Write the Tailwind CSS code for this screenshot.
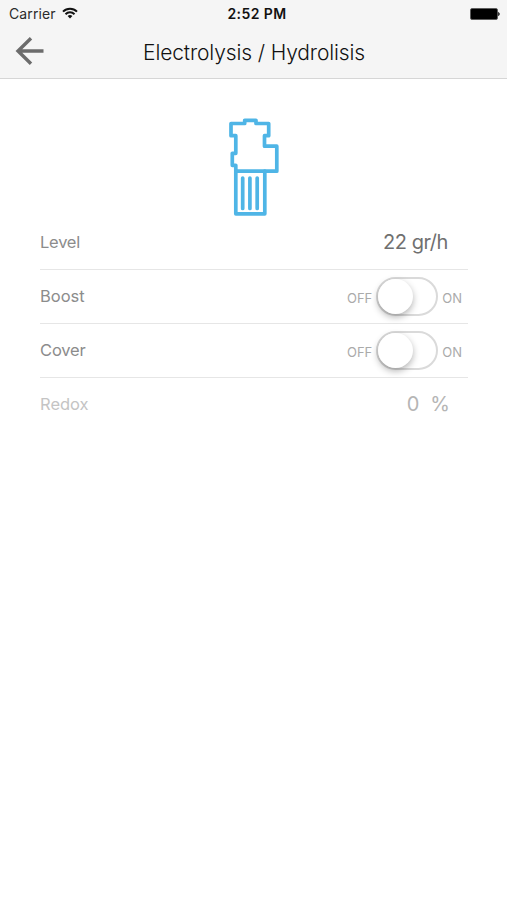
<!DOCTYPE html>
<html lang="en">
<head>
<meta charset="utf-8">
<meta name="viewport" content="width=device-width, initial-scale=1">
<title>Electrolysis / Hydrolisis</title>
<script src="https://cdn.jsdelivr.net/npm/@tailwindcss/browser@4"></script>
</head>
<body class="bg-white font-['Inter',sans-serif]">
<div class="flex h-[900px] w-[507px] flex-col overflow-hidden">
  <header class="h-[79px] shrink-0 border-b border-[#d6d6d6] bg-[#f5f5f5]">
    <div class="grid h-[27px] grid-cols-[1fr_80px_1fr] items-center pl-[9px] pr-[7px]">
      <div class="flex items-center gap-[6px]">
        <span class="text-[14px] leading-[27px] tracking-[0.12px] text-[#2b2b2b]">Carrier</span>
        <svg class="-mt-[2px] h-[12px] w-[16px]" viewBox="0 0 16 12" fill="none" stroke="#111" stroke-width="2">
          <path d="M1 4.6a10 10 0 0 1 14 0M3.5 7.2a6.4 6.4 0 0 1 9 0"/>
          <path d="M8 11.6 5.6 9.1a3.4 3.4 0 0 1 4.8 0z" fill="#111" stroke="none"/>
        </svg>
      </div>
      <span class="pl-[5px] text-center text-[14px] font-semibold leading-[27px] tracking-[0.4px] text-[#111]">2:52 PM</span>
      <svg class="h-[12px] w-[30px] justify-self-end" viewBox="0 0 30 12">
        <rect x="0.5" y="0.5" width="27" height="11" rx="1.5" fill="#000" stroke="#555" stroke-width="0.8"/>
        <path d="M28.2 4.2a1.9 1.9 0 0 1 0 3.6z" fill="#222" stroke="#222" stroke-width="0.5"/>
      </svg>
    </div>
    <div class="grid h-[51px] grid-cols-[60px_1fr_60px] items-center">
      <svg class="ml-[15px] -mt-[3px] h-[30px] w-[30px]" viewBox="0 0 30 30" fill="none" stroke="#6c6c6c" stroke-width="3.4">
        <path d="M16 2.2 3 15l13 12.8M3 15h25.5"/>
      </svg>
      <h1 class="pl-px text-center text-[21px] font-light leading-[51px] tracking-[-0.13px] text-[#111]">Electrolysis / Hydrolisis</h1>
    </div>
  </header>

  <main class="flex flex-col px-10 pt-[37px]">
    <svg class="mx-auto h-[100px] w-[54px]" viewBox="227 116 54 100" fill="none" stroke="#4fb5e6" stroke-width="3.7" stroke-linejoin="round" stroke-linecap="round">
      <path d="M231 123.5H244.7V120.3H256V123.5H268.7V135.7H264.5V146.2H276.8V171.2H235.8V165.3H232.3V153.3H235.8V135.7H231z"/>
      <path d="M235.8 171.2V213.8H264.8V171.2M242.7 178V208.5M249.9 178V208.5M257.2 178V208.5"/>
    </svg>
    <ul class="w-[428px] text-[16.5px] leading-[24px] text-[#8c8c8c]">
      <li class="flex h-[54px] items-center justify-between border-b border-[#e6e6e6] pr-5">
        <span class="pb-px tracking-[-0.25px]">Level</span>
        <span class="pb-px text-[20px] tracking-[-0.45px] text-[#707070]">22 gr/h</span>
      </li>
      <li class="flex h-[54px] items-center justify-between border-b border-[#e6e6e6] pr-[6px]">
        <span class="pb-px">Boost</span>
        <div class="flex items-center gap-1 text-[13px] text-[#aaa]">
          <span class="pt-[2px]">OFF</span>
          <span class="flex h-[39px] w-[62px] items-center rounded-full border-2 border-[#dadada] bg-white">
            <span class="h-[35px] w-[35px] rounded-full bg-white shadow-[0_3px_7px_rgba(0,0,0,0.3)]"></span>
          </span>
          <span class="pt-[2px]">ON</span>
        </div>
      </li>
      <li class="flex h-[54px] items-center justify-between border-b border-[#e6e6e6] pr-[6px]">
        <span class="pb-px tracking-[-0.15px]">Cover</span>
        <div class="flex items-center gap-1 text-[13px] text-[#aaa]">
          <span class="pt-[2px]">OFF</span>
          <span class="flex h-[39px] w-[62px] items-center rounded-full border-2 border-[#dadada] bg-white">
            <span class="h-[35px] w-[35px] rounded-full bg-white shadow-[0_3px_7px_rgba(0,0,0,0.3)]"></span>
          </span>
          <span class="pt-[2px]">ON</span>
        </div>
      </li>
      <li class="flex h-[54px] items-center justify-between pr-[18px] pb-[2px] text-[#c4c4c4]">
        <span>Redox</span>
        <span class="flex gap-[11px] text-[20px] text-[#b5b5b5]"><span>0</span><span>%</span></span>
      </li>
    </ul>
  </main>
</div>
</body>
</html>
